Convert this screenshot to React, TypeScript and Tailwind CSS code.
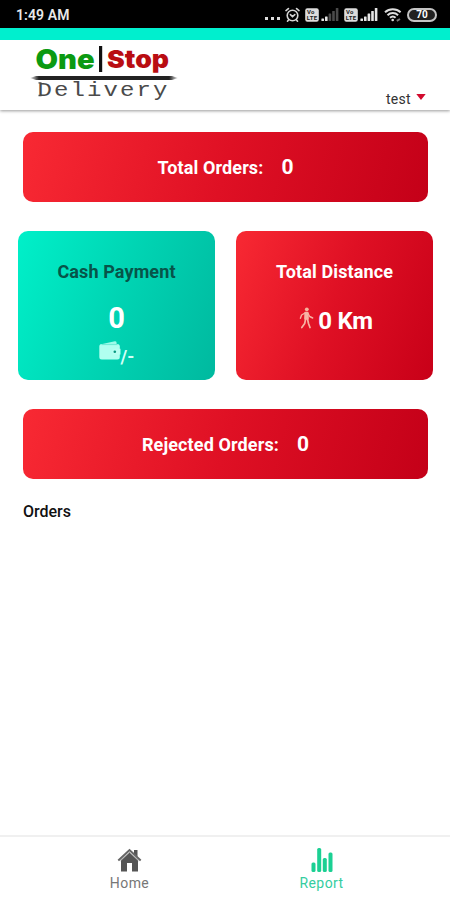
import type { ReactNode } from "react";

function AlarmIcon() {
  return (
    <svg className="h-4 w-[15px]" viewBox="0 0 15 16" fill="none" stroke="#d4d4d4" strokeWidth="1.6" strokeLinecap="round">
      <circle cx="7.5" cy="8.5" r="5.3" />
      <path d="M5.4 7.6l2.1 2 2.3-2" />
      <path d="M1 3.6l2.4-2M14 3.6l-2.4-2M3.5 12.9l-1 1.3M11.5 12.9l1 1.3" />
    </svg>
  );
}

function VolteIcon() {
  return (
    <svg className="h-[14px] w-[14px]" viewBox="0 0 14 14">
      <rect x="0.2" y="0.3" width="13.6" height="13.4" rx="2.2" fill="#dcdcdc" />
      <text x="2" y="6.4" fontSize="6" fontWeight="700" fontFamily="Roboto, sans-serif" fill="#222" textLength="7.5">Vo</text>
      <text x="1.8" y="12.2" fontSize="6" fontWeight="700" fontFamily="Roboto, sans-serif" fill="#222" textLength="10.4">LTE</text>
    </svg>
  );
}

function SignalIcon({ level }: { level: number }) {
  return (
    <svg className="h-[13px] w-[18px]" viewBox="0 0 18 13">
      {[2.5, 4.5, 7.5, 10, 13].map((h, i) => (
        <rect key={i} x={0.4 + i * 3.6} y={13 - h} width="2.6" height={h} rx="0.5" fill={i < level ? "#e5e5e5" : "#4a4a4a"} />
      ))}
    </svg>
  );
}

function WifiIcon() {
  return (
    <svg className="h-[14px] w-[18px]" viewBox="0 0 18 14" fill="none" stroke="#dedede" strokeWidth="2">
      <path d="M1 4.3c4.4-4 11.2-4 15.6 0" />
      <path d="M3.5 7.2c3-2.8 7.6-2.8 10.6 0" />
      <path d="M6 9.8c1.6-1.4 4-1.4 5.6 0" />
      <circle cx="8.7" cy="12" r="1.3" fill="#dedede" stroke="none" />
      <path d="M12.8 12.8l3.2-1.8" stroke="#777" />
    </svg>
  );
}

function StatusBar() {
  return (
    <div className="flex h-7 items-center bg-black pl-4 pr-[13px] pt-px text-white">
      <span className="mt-px text-[14px] font-semibold leading-none tracking-[0.1px] text-[#e8e8e8]">1:49 AM</span>
      <div className="ml-auto flex items-center">
        <div className="mr-[5px] mt-2 flex gap-[3px]">
          <i className="h-[3px] w-[3px] bg-[#dedede]" />
          <i className="h-[3px] w-[3px] bg-[#dedede]" />
          <i className="h-[3px] w-[3px] bg-[#dedede]" />
        </div>
        <AlarmIcon />
        <span className="ml-[5px] mr-[2px]"><VolteIcon /></span>
        <SignalIcon level={2} />
        <span className="ml-[5px] mr-[2px]"><VolteIcon /></span>
        <SignalIcon level={5} />
        <span className="ml-[6px] mr-[5px]"><WifiIcon /></span>
        <span className="flex h-[14px] w-[30px] items-center justify-center rounded-full border-2 border-[#c4c4c4] bg-[#222] text-[10px] font-bold leading-none">
          70
        </span>
      </div>
    </div>
  );
}

function Logo() {
  return (
    <svg className="h-[66px] w-[150px]" viewBox="30 42 150 66">
      <defs>
        <linearGradient id="rule" x1="0" x2="1">
          <stop offset="0" stopColor="#222" stopOpacity="0.1" />
          <stop offset="0.06" stopColor="#222" />
          <stop offset="0.94" stopColor="#222" />
          <stop offset="1" stopColor="#222" stopOpacity="0.1" />
        </linearGradient>
      </defs>
      <text x="35.5" y="68.5" fontFamily="Inter, sans-serif" fontWeight="900" fontSize="27" fill="#0b9a12" textLength="59" lengthAdjust="spacingAndGlyphs">One</text>
      <rect x="99" y="46" width="3.2" height="26" fill="#111" />
      <text x="107" y="68" fontFamily="Inter, sans-serif" fontWeight="900" fontSize="24.5" fill="#b90d12" textLength="62" lengthAdjust="spacingAndGlyphs">Stop</text>
      <path d="M30 78l6-2h136l6 2-6 2H36z" fill="url(#rule)" />
      <text transform="translate(37.5 96) scale(1.2 1)" fontFamily="'Liberation Mono', monospace" fontSize="20" fill="#4a4a4a" letterSpacing="1.75">Delivery</text>
      <path d="M38.500 82.800h3M38.500 95.500h3" stroke="#4a4a4a" strokeWidth="1.300" />
    </svg>
  );
}

function Header() {
  return (
    <header className="box-content flex h-[70px] justify-between border-t-12 border-[#00efce] bg-white pl-[30px] pr-6 shadow-[0_1px_3px_rgba(0,0,0,0.4)]">
      <div className="pt-[2px]"><Logo /></div>
      <button className="mt-auto flex items-center gap-[5px] pb-[2px] text-[14px] leading-[18px] tracking-[0.3px] text-[#333]">
        test
        <svg className="mb-1 h-[6px] w-[10px]" viewBox="0 0 10 6"><path d="M0.3 0h9.4L5 6z" fill="#d20a2e" /></svg>
      </button>
    </header>
  );
}

function Banner({ label, value }: { label: string; value: number }) {
  return (
    <div className="ml-[23px] mr-[22px] flex h-[70px] items-center justify-center gap-[18px] rounded-[10px] bg-[linear-gradient(105deg,#f82933_0%,#df1024_50%,#c40018_100%)] text-white">
      <span className="text-[18px] font-bold tracking-[0.12px]">{label}</span>
      <span className="pt-px text-[21px] font-bold">{value}</span>
    </div>
  );
}

function Card({ title, className, children }: { title: string; className: string; children: ReactNode }) {
  return (
    <div className={`flex h-[149px] flex-1 flex-col items-center rounded-[10px] pt-[29px] ${className}`}>
      <h2 className="text-[18px] font-bold leading-6 tracking-[0.12px]">{title}</h2>
      {children}
    </div>
  );
}

function WalletIcon() {
  return (
    <svg className="h-[19px] w-[22px]" viewBox="0 0 22 19">
      <path d="M1 3.4L15.8.3q1.6-.2 1.8 1.4v2H3z" fill="#9dfbe9" />
      <rect x="0.3" y="3" width="20.5" height="15.5" rx="2.5" fill="#b0fff0" />
      <path d="M2.5 3.6h16" stroke="#4de0c5" strokeWidth="0.7" />
      <path d="M21.5 7.8h-5.5a2.9 2.9 0 0 0 0 5.8h5.5z" fill="#b8fff2" />
      <circle cx="15.8" cy="10.7" r="1.3" fill="#079880" />
    </svg>
  );
}

function WalkIcon() {
  return (
    <svg className="h-[22px] w-[15px]" viewBox="0 0 15 22" fill="none" stroke="#f7b3a4" strokeLinecap="round" strokeLinejoin="round">
      <circle cx="7.8" cy="2.3" r="1.9" fill="#f5b49c" stroke="none" />
      <path d="M6.3 5.8h2.4l.2 6H6.1z" fill="#f7b3a4" strokeWidth="1.9" />
      <path d="M6 6L2.6 8 1.4 11.3M9 6.5l1.7 3 3 1.5" strokeWidth="1.4" />
      <path d="M6.5 12.5L5.7 16.5 2.8 20.6M8.6 12.5l.9 4 1.5 4" strokeWidth="1.7" />
    </svg>
  );
}

function HomeIcon() {
  return (
    <svg className="h-6 w-[25px]" viewBox="0 0 25 24">
      <path d="M17 2h3.5v7L17 6zM4 12l8.5-8 8.5 8v11.500h-6V15h-5v8.500H4z" fill="#555" />
      <path d="M1.3 12.5L12.5 2l11.2 10.500" fill="none" stroke="#666" strokeWidth="2" />
      <path d="M3 13.3l9.5-8.8 9.5 8.800" fill="none" stroke="#bbb" strokeWidth="0.7" />
    </svg>
  );
}

function ReportIcon() {
  return (
    <svg className="h-6 w-[22px]" viewBox="0 0 22 24" fill="#1bd093">
      <rect x="0.5" y="14.5" width="4" height="9.5" rx="1.500" />
      <rect x="6.2" y="0" width="4" height="24" rx="1.500" />
      <rect x="11.8" y="10" width="4" height="14" rx="1.500" />
      <rect x="17.5" y="4.5" width="4" height="19.5" rx="1.500" />
    </svg>
  );
}

function BottomNav() {
  return (
    <nav className="mt-auto flex h-[65px] justify-center border-t-2 border-[#f0f0f0] bg-white pt-[11px] text-[14px] leading-4 tracking-[0.4px]">
      <div className="ml-[1px] flex w-48 flex-col items-center gap-[3px] text-[#777]">
        <HomeIcon />
        Home
      </div>
      <div className="flex w-48 flex-col items-center gap-[3px] text-[#35cda0]">
        <ReportIcon />
        Report
      </div>
    </nav>
  );
}

export default function App() {
  return (
    <div className="flex h-[900px] w-[450px] flex-col overflow-hidden bg-white font-['Roboto',sans-serif]">
      <StatusBar />
      <Header />
      <main className="flex flex-col gap-[29px] pt-[22px]">
        <Banner label="Total Orders:" value={0} />
        <div className="flex gap-[21px] pl-[18px] pr-[17px]">
          <Card title="Cash Payment" className="bg-[linear-gradient(110deg,#00f0c9_0%,#00d4b3_50%,#00b99f_100%)] text-[#075449]">
            <div className="mt-[18px] text-[29px] font-bold leading-8 text-white">0</div>
            <div className="mt-[7px] flex items-start text-[18px] font-bold leading-5 text-[#d2fff7]">
              <WalletIcon />
              <span className="mt-[6px]">/-</span>
            </div>
          </Card>
          <Card title="Total Distance" className="bg-[linear-gradient(110deg,#f82933_0%,#df1024_50%,#c80018_100%)] text-white">
            <div className="mt-[21px] flex items-center gap-[4px] pl-[3px] text-[24px] font-bold leading-8">
              <span className="mb-[7px]"><WalkIcon /></span>
              <span className="tracking-[-0.3px]">0 Km</span>
            </div>
          </Card>
        </div>
        <Banner label="Rejected Orders:" value={0} />
        <h3 className="-mt-[6px] ml-[23px] text-[16px] font-medium leading-5 text-[#111]">Orders</h3>
      </main>
      <BottomNav />
    </div>
  );
}
